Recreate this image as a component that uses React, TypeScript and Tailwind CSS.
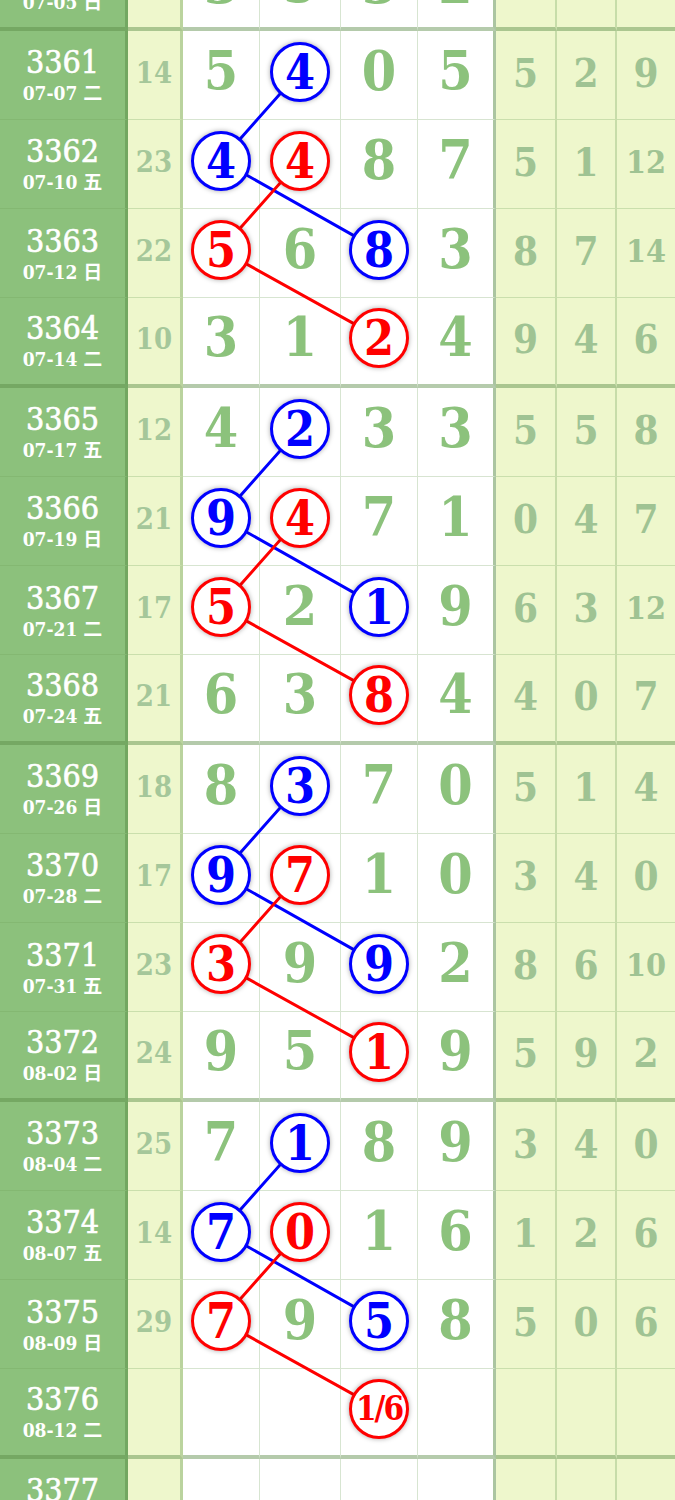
import React from 'react';

type Mark = { v: string; c: 'b' | 'r' };
type M = number | Mark | null;

interface Row {
  n: number;
  d: string;
  s: number | null;
  m: M[];
  r: (number | null)[];
}

const B = (v: string | number): Mark => ({ v: String(v), c: 'b' });
const R = (v: string | number): Mark => ({ v: String(v), c: 'r' });

const rows: Row[] = [
  { n: 3360, d: '07-05 日', s: 15, m: [3, 5, 3, 2], r: [4, 1, 7] },
  { n: 3361, d: '07-07 二', s: 14, m: [5, B(4), 0, 5], r: [5, 2, 9] },
  { n: 3362, d: '07-10 五', s: 23, m: [B(4), R(4), 8, 7], r: [5, 1, 12] },
  { n: 3363, d: '07-12 日', s: 22, m: [R(5), 6, B(8), 3], r: [8, 7, 14] },
  { n: 3364, d: '07-14 二', s: 10, m: [3, 1, R(2), 4], r: [9, 4, 6] },
  { n: 3365, d: '07-17 五', s: 12, m: [4, B(2), 3, 3], r: [5, 5, 8] },
  { n: 3366, d: '07-19 日', s: 21, m: [B(9), R(4), 7, 1], r: [0, 4, 7] },
  { n: 3367, d: '07-21 二', s: 17, m: [R(5), 2, B(1), 9], r: [6, 3, 12] },
  { n: 3368, d: '07-24 五', s: 21, m: [6, 3, R(8), 4], r: [4, 0, 7] },
  { n: 3369, d: '07-26 日', s: 18, m: [8, B(3), 7, 0], r: [5, 1, 4] },
  { n: 3370, d: '07-28 二', s: 17, m: [B(9), R(7), 1, 0], r: [3, 4, 0] },
  { n: 3371, d: '07-31 五', s: 23, m: [R(3), 9, B(9), 2], r: [8, 6, 10] },
  { n: 3372, d: '08-02 日', s: 24, m: [9, 5, R(1), 9], r: [5, 9, 2] },
  { n: 3373, d: '08-04 二', s: 25, m: [7, B(1), 8, 9], r: [3, 4, 0] },
  { n: 3374, d: '08-07 五', s: 14, m: [B(7), R(0), 1, 6], r: [1, 2, 6] },
  { n: 3375, d: '08-09 日', s: 29, m: [R(7), 9, B(5), 8], r: [5, 0, 6] },
  { n: 3376, d: '08-12 二', s: null, m: [null, null, R('1/6'), null], r: [null, null, null] },
  { n: 3377, d: '08-14 日', s: null, m: [null, null, null, null], r: [null, null, null] },
];

const H = 89.25;
const isThick = (i: number) => (rows[i].n - 3360) % 4 === 0;
const cy = (i: number) => i * H + (H - (isThick(i) ? 4 : 1)) / 2 - 3;
const CX = [221, 300, 379];

function Circle({ mark }: { mark: Mark }) {
  const blue = mark.c === 'b';
  const small = mark.v.length > 1;
  return (
    <div
      className={
        'relative z-10 flex h-[60px] w-[60px] items-center justify-center rounded-full border-[3px] bg-white font-bold leading-none shadow-[0_0_5px_rgba(0,0,0,0.35)] ' +
        (blue ? 'border-[#0000ff] text-[#0000ff] ' : 'border-[#ff0000] text-[#ff0000] ') +
        (small ? 'text-[33px] tracking-[-2px]' : 'text-[48px]')
      }
    >
      {mark.v}
    </div>
  );
}

export default function App() {
  const lines: { pts: string; color: string }[] = [];
  [1, 5, 9, 13].forEach((g) => {
    lines.push({
      pts: `${CX[1]},${cy(g)} ${CX[0]},${cy(g + 1)} ${CX[2]},${cy(g + 2)}`,
      color: '#0000ff',
    });
    lines.push({
      pts: `${CX[1]},${cy(g + 1)} ${CX[0]},${cy(g + 2)} ${CX[2]},${cy(g + 3)}`,
      color: '#ff0000',
    });
  });

  return (
    <div className="h-[1500px] w-[675px] overflow-hidden bg-white font-['DejaVu_Serif_Condensed','DejaVu_Serif','Noto_Sans_CJK_SC',serif]">
      <div className="relative mt-[-58.75px]">
        {rows.map((row, i) => {
          const thick = isThick(i);
          const bb = thick
            ? 'border-b-4 border-b-[rgba(90,140,70,0.45)] '
            : 'border-b border-b-[rgba(110,160,90,0.28)] ';
          return (
            <div
              key={row.n}
              className="grid h-[89.25px] grid-cols-[128px_55px_77px_81px_77px_78px_61px_60px_58px]"
            >
              <div
                className={
                  bb +
                  'flex flex-col items-center justify-center border-r-[3px] border-r-[rgba(70,120,50,0.35)] bg-[#8cc17c] text-white'
                }
              >
                <div className="text-[32px] leading-[36px] [-webkit-text-stroke:0.6px_#ffffff]">{row.n}</div>
                <div className="text-[19px] font-bold leading-[24px]">
                  {row.d.split(' ')[0]}{' '}
                  <span className="font-['Noto_Sans_CJK_SC',sans-serif]">{row.d.split(' ')[1]}</span>
                </div>
              </div>
              <div
                className={
                  bb +
                  'flex items-center justify-center border-r-[3px] border-r-[rgba(110,160,90,0.4)] bg-[#eef7cc] pb-[3px] text-[29px] font-bold leading-none text-[#a5c79a]'
                }
              >
                {row.s ?? ''}
              </div>
              {row.m.map((v, j) => {
                const br =
                  j === 3
                    ? 'border-r-[3px] border-r-[rgba(90,140,70,0.5)] '
                    : 'border-r border-r-[rgba(110,160,90,0.28)] ';
                if (v !== null && typeof v === 'object') {
                  return (
                    <div key={j} className={bb + br + 'flex items-center justify-center bg-white pb-[6px]'}>
                      <Circle mark={v} />
                    </div>
                  );
                }
                return (
                  <div
                    key={j}
                    className={
                      bb +
                      br +
                      (i === 0 ? 'pb-[1px] ' : 'pb-[9px] ') +
                      'flex items-center justify-center bg-white text-[55px] font-bold leading-none text-[#8cc27c]'
                    }
                  >
                    {v ?? ''}
                  </div>
                );
              })}
              {row.r.map((v, j) => (
                <div
                  key={j}
                  className={
                    bb +
                    (j < 2 ? 'border-r-2 border-r-[rgba(110,160,90,0.3)] ' : '') +
                    'flex items-center justify-center bg-[#eef7cc] pb-[4px] font-bold leading-none text-[#9fc393] ' +
                    (v !== null && v >= 10 ? 'text-[32px]' : 'text-[40px]')
                  }
                >
                  {v ?? ''}
                </div>
              ))}
            </div>
          );
        })}
        <svg
          className="pointer-events-none absolute left-0 top-0"
          width={675}
          height={rows.length * H}
        >
          {lines.map((l, k) => (
            <polyline key={k} points={l.pts} fill="none" stroke={l.color} strokeWidth={3} />
          ))}
        </svg>
      </div>
    </div>
  );
}
